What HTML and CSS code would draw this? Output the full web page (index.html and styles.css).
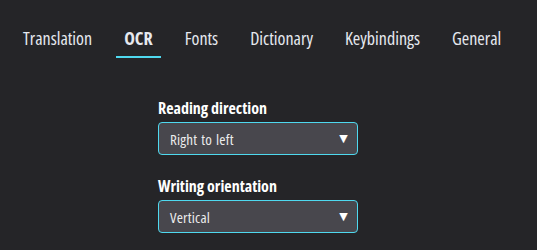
FILE: index.html
```html
<!DOCTYPE html>
<html lang="en">
<head>
    <meta charset="UTF-8">
    <meta name="viewport" content="width=device-width, initial-scale=1.0">
    <title>Settings</title>
    <link rel="stylesheet" href="styles.css">
</head>
<body>

    <div class="tabs">
        <div class="tab">Translation</div>
        <div class="tab active">OCR</div>
        <div class="tab">Fonts</div>
        <div class="tab">Dictionary</div>
        <div class="tab">Keybindings</div>
        <div class="tab">General</div>
    </div>

    <div class="form">
        <div class="field">
            <label class="field-label">Reading direction</label>
            <div class="select">
                <span>Right to left</span>
                <span class="arrow">&#9660;</span>
            </div>
        </div>
        <div class="field">
            <label class="field-label">Writing orientation</label>
            <div class="select">
                <span>Vertical</span>
                <span class="arrow">&#9660;</span>
            </div>
        </div>
    </div>

</body>
</html>
```

FILE: styles.css
```css
body {
    font-family: "Open Sans", "DejaVu Sans Condensed", sans-serif;
    font-stretch: 75%;
    background-color: #252528;
    color: #e6e9ef;
    margin: 0;
    padding: 0;
}

.tabs {
    display: flex;
    gap: 16px;
    padding: 28px 0 0 15px;
}

.tab {
    font-size: 18px;
    line-height: 20px;
    padding: 0 8px 8px;
    border-bottom: 2px solid transparent;
}

.tab.active {
    font-weight: bold;
    border-bottom-color: #4fd9ef;
}

.form {
    display: flex;
    flex-direction: column;
    gap: 22px;
    width: 200px;
    margin: 41px 0 0 158px;
}

.field {
    display: flex;
    flex-direction: column;
    gap: 5px;
}

.field-label {
    font-size: 16px;
    line-height: 18px;
    font-weight: bold;
    color: #ffffff;
}

.select {
    display: flex;
    justify-content: space-between;
    align-items: center;
    height: 31px;
    padding: 0 9px 0 11px;
    background-color: #48474d;
    border: 1px solid #4fd9ef;
    border-radius: 4px;
    font-size: 15px;
    letter-spacing: 0.2px;
    word-spacing: 1px;
    color: #ececec;
}

.arrow {
    font-family: "DejaVu Sans", sans-serif;
    font-stretch: normal;
    font-size: 11px;
    color: #ffffff;
}
```
